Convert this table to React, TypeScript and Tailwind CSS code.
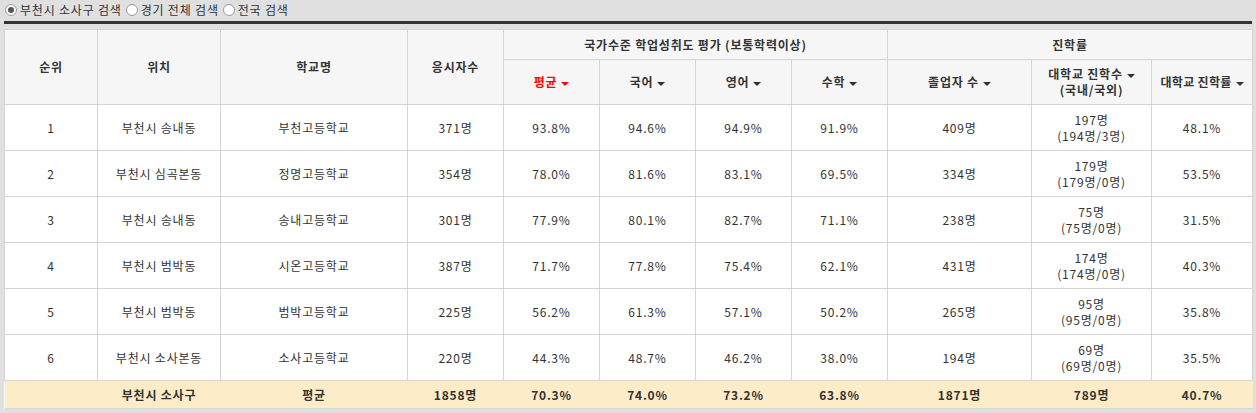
import React from 'react';

type Row = {
  rank: number;
  loc: string;
  school: string;
  takers: string;
  avg: string;
  kor: string;
  eng: string;
  math: string;
  grads: string;
  uni: string;
  uniDetail: string;
  rate: string;
};

const rows: Row[] = [
  { rank: 1, loc: '부천시 송내동', school: '부천고등학교', takers: '371명', avg: '93.8%', kor: '94.6%', eng: '94.9%', math: '91.9%', grads: '409명', uni: '197명', uniDetail: '(194명/3명)', rate: '48.1%' },
  { rank: 2, loc: '부천시 심곡본동', school: '정명고등학교', takers: '354명', avg: '78.0%', kor: '81.6%', eng: '83.1%', math: '69.5%', grads: '334명', uni: '179명', uniDetail: '(179명/0명)', rate: '53.5%' },
  { rank: 3, loc: '부천시 송내동', school: '송내고등학교', takers: '301명', avg: '77.9%', kor: '80.1%', eng: '82.7%', math: '71.1%', grads: '238명', uni: '75명', uniDetail: '(75명/0명)', rate: '31.5%' },
  { rank: 4, loc: '부천시 범박동', school: '시온고등학교', takers: '387명', avg: '71.7%', kor: '77.8%', eng: '75.4%', math: '62.1%', grads: '431명', uni: '174명', uniDetail: '(174명/0명)', rate: '40.3%' },
  { rank: 5, loc: '부천시 범박동', school: '범박고등학교', takers: '225명', avg: '56.2%', kor: '61.3%', eng: '57.1%', math: '50.2%', grads: '265명', uni: '95명', uniDetail: '(95명/0명)', rate: '35.8%' },
  { rank: 6, loc: '부천시 소사본동', school: '소사고등학교', takers: '220명', avg: '44.3%', kor: '48.7%', eng: '46.2%', math: '38.0%', grads: '194명', uni: '69명', uniDetail: '(69명/0명)', rate: '35.5%' },
];

function Arrow({ red }: { red?: boolean }) {
  return (
    <span
      className={`ml-1 inline-block align-middle border-x-[4px] border-t-[4px] border-x-transparent ${red ? 'border-t-[#ff0000]' : 'border-t-[#333]'}`}
    />
  );
}

function Radio({ checked, label }: { checked?: boolean; label: string }) {
  return (
    <label className="flex items-center gap-[3px]">
      <span className="w-[12px] h-[12px] rounded-full bg-white border border-[#9a9a9a] flex items-center justify-center">
        {checked && <span className="w-[6px] h-[6px] rounded-full bg-[#555]" />}
      </span>
      <span>{label}</span>
    </label>
  );
}

export default function App() {
  const th = 'border border-[#d5d5d5] font-bold text-[#333] text-center';
  const td = 'border border-[#d5d5d5] text-center text-[#333]';
  const tf = 'border-y border-[#d5d5d5] text-center font-bold text-[#333]';

  return (
    <div className="w-[1256px] h-[413px] bg-[#e0e0e0] text-[12px] tracking-[0.8px] text-[#333] font-['Noto_Sans_CJK_KR','Noto_Sans',sans-serif] overflow-hidden">
      <div className="flex items-center gap-[4px] h-[20px] px-[5px]">
        <Radio checked label="부천시 소사구 검색" />
        <Radio label="경기 전체 검색" />
        <Radio label="전국 검색" />
      </div>
      <div className="mx-[4px] h-[3px] bg-[#333] mt-[1px]" />
      <div className="px-[4px] pt-[5px]">
        <table className="w-[1248px] table-fixed border-collapse bg-white leading-[16px]">
          <colgroup>
            <col className="w-[93px]" />
            <col className="w-[123px]" />
            <col className="w-[187px]" />
            <col className="w-[96px]" />
            <col className="w-[96px]" />
            <col className="w-[96px]" />
            <col className="w-[96px]" />
            <col className="w-[96px]" />
            <col className="w-[144px]" />
            <col className="w-[120px]" />
            <col className="w-[101px]" />
          </colgroup>
          <thead className="bg-[#f6f6f6]">
            <tr className="h-[30px]">
              <th rowSpan={2} className={th}>순위</th>
              <th rowSpan={2} className={th}>위치</th>
              <th rowSpan={2} className={th}>학교명</th>
              <th rowSpan={2} className={th}>응시자수</th>
              <th colSpan={4} className={th}>국가수준 학업성취도 평가 (보통학력이상)</th>
              <th colSpan={3} className={th}>진학률</th>
            </tr>
            <tr className="h-[45px]">
              <th className={`${th} !text-[#ff0000]`}>평균<Arrow red /></th>
              <th className={th}>국어<Arrow /></th>
              <th className={th}>영어<Arrow /></th>
              <th className={th}>수학<Arrow /></th>
              <th className={th}>졸업자 수<Arrow /></th>
              <th className={th}>대학교 진학수<Arrow /><br />(국내/국외)</th>
              <th className={`${th} tracking-[0.3px]`}>대학교 진학률<Arrow /></th>
            </tr>
          </thead>
          <tbody>
            {rows.map((r) => (
              <tr key={r.rank} className="h-[46px]">
                <td className={td}>{r.rank}</td>
                <td className={td}>{r.loc}</td>
                <td className={td}>{r.school}</td>
                <td className={td}>{r.takers}</td>
                <td className={td}>{r.avg}</td>
                <td className={td}>{r.kor}</td>
                <td className={td}>{r.eng}</td>
                <td className={td}>{r.math}</td>
                <td className={td}>{r.grads}</td>
                <td className={td}>{r.uni}<br />{r.uniDetail}</td>
                <td className={td}>{r.rate}</td>
              </tr>
            ))}
          </tbody>
          <tfoot className="bg-[#fdecc8]">
            <tr className="h-[28px]">
              <td className={tf}></td>
              <td className={tf}>부천시 소사구</td>
              <td className={tf}>평균</td>
              <td className={tf}>1858명</td>
              <td className={tf}>70.3%</td>
              <td className={tf}>74.0%</td>
              <td className={tf}>73.2%</td>
              <td className={tf}>63.8%</td>
              <td className={tf}>1871명</td>
              <td className={tf}>789명</td>
              <td className={tf}>40.7%</td>
            </tr>
          </tfoot>
        </table>
      </div>
    </div>
  );
}
